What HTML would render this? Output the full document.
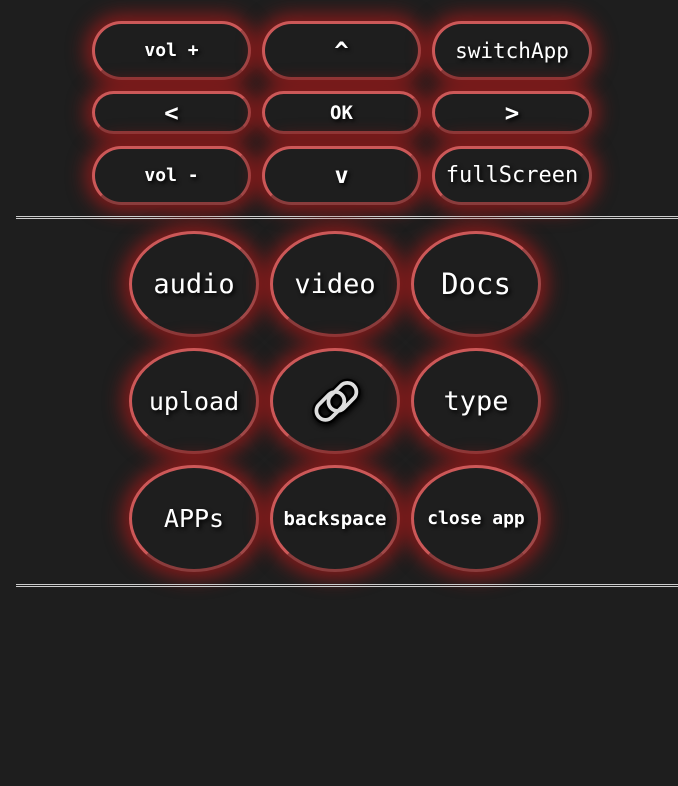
<!DOCTYPE html>
<html><head><style>
body{margin:0;width:678px;height:786px;background:#1e1e1e;overflow:hidden;position:relative;font-family:"DejaVu Sans Mono","Liberation Mono",monospace;}
.b{position:absolute;box-sizing:border-box;background:#1e1e1e;border:3px solid #cc5858;border-bottom-color:#8a3c3c;border-right-color:#a04848;
box-shadow:0 0 18px 7px rgba(170,25,25,0.7);color:#fff;display:flex;align-items:center;justify-content:center;
text-shadow:2px 2px 4px #000;font-weight:bold;white-space:nowrap}
.p{border-radius:30px;font-size:18px}
.c{border-radius:50%;font-weight:normal;font-size:27px}
hr{position:absolute;left:16px;right:0;margin:0;height:1px;border:none;border-top:1px solid #ccc;border-bottom:1px solid #ccc;height:1px}
</style></head><body>
<div class="b p" style="left:92px;top:21px;width:159px;height:59px">vol +</div>
<div class="b p" style="left:262px;top:21px;width:159px;height:59px;font-size:24px">^</div>
<div class="b p" style="left:432px;top:21px;width:160px;height:59px;font-weight:normal;font-size:21px">switchApp</div>
<div class="b p" style="left:92px;top:91px;width:159px;height:43px;font-size:24px">&lt;</div>
<div class="b p" style="left:262px;top:91px;width:159px;height:43px;font-size:19px">OK</div>
<div class="b p" style="left:432px;top:91px;width:160px;height:43px;font-size:24px">&gt;</div>
<div class="b p" style="left:92px;top:146px;width:159px;height:59px">vol -</div>
<div class="b p" style="left:262px;top:146px;width:159px;height:59px;font-size:23px">v</div>
<div class="b p" style="left:432px;top:146px;width:160px;height:59px;font-weight:normal;font-size:22px">fullScreen</div>
<hr style="top:216px">
<div class="b c" style="left:129px;top:231px;width:130px;height:106px">audio</div>
<div class="b c" style="left:270px;top:231px;width:130px;height:106px">video</div>
<div class="b c" style="left:411px;top:231px;width:130px;height:106px;font-size:29px">Docs</div>
<div class="b c" style="left:129px;top:348px;width:130px;height:106px;font-size:25px">upload</div>
<div class="b c" style="left:270px;top:348px;width:130px;height:106px">
<svg width="64" height="64" viewBox="0 0 60 60" style="filter:drop-shadow(1px 2px 3px #000);margin-left:2px"><g transform="rotate(-45 30 30)" fill="none" stroke="#000" stroke-width="8"><rect x="8" y="21" width="30" height="17" rx="8.5"/><rect x="22" y="23" width="30" height="17" rx="8.5"/></g><g transform="rotate(-45 30 30)" fill="none" stroke="#ddd" stroke-width="3.5"><rect x="8" y="21" width="30" height="17" rx="8.5"/><rect x="22" y="23" width="30" height="17" rx="8.5"/></g></svg></div>
<div class="b c" style="left:411px;top:348px;width:130px;height:106px">type</div>
<div class="b c" style="left:129px;top:465px;width:130px;height:107px;font-size:25px">APPs</div>
<div class="b c" style="left:270px;top:465px;width:130px;height:107px;font-size:19px;font-weight:bold">backspace</div>
<div class="b c" style="left:411px;top:465px;width:130px;height:107px;font-size:18px;font-weight:bold">close app</div>
<hr style="top:584px">
</body></html>
